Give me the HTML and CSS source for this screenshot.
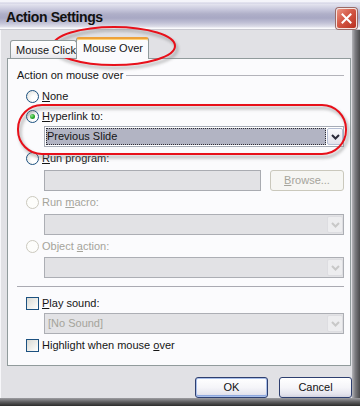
FILE: index.html
```html
<!doctype html>
<html>
	<head>
		<meta charset="utf-8" />
		<meta name="viewport" content="width=device-width, initial-scale=1" />
		<title>Action Settings</title>
		<link rel="stylesheet" href="styles.css">
	</head>
	<body>
		<div class="window">
			<header class="titlebar">
				<h1 class="title">Action Settings</h1>
				<span class="close" aria-label="Close">
					<svg width="11" height="11" viewBox="0 0 11 11">
						<path d="M1.5 1.5 L9.5 9.5 M9.5 1.5 L1.5 9.5" stroke="#fff" stroke-width="2" stroke-linecap="square" />
					</svg>
				</span>
			</header>

			<div class="frame">
				<div class="dialog">
					<div class="tabs">
						<span class="tab">Mouse Click</span>
						<span class="tab active">Mouse Over</span>
					</div>

					<div class="panel">
						<div class="group-title">Action on mouse over</div>

						<div class="opt gap-none">
							<span class="radio"></span>
							<span><u>N</u>one</span>
						</div>
						<div class="opt gap-s">
							<span class="radio on"></span>
							<span><u>H</u>yperlink to:</span>
						</div>
						<div class="select field gap-xs">
							<span class="value hl">Previous Slide</span>
							<span class="drop">
								<svg width="9" height="6" viewBox="0 0 9 6"><path d="M1 1 L4.5 4.5 L8 1" fill="none" stroke="currentColor" stroke-width="2" /></svg>
							</span>
						</div>

						<div class="opt gap-m">
							<span class="radio"></span>
							<span><u>R</u>un program:</span>
						</div>
						<div class="field program gap-l">
							<span class="textbox"></span>
							<span class="browse"><u>B</u>rowse...</span>
						</div>

						<div class="opt off gap-m">
							<span class="radio"></span>
							<span>Run <u>m</u>acro:</span>
						</div>
						<div class="select off field gap-l">
							<span class="value"></span>
							<span class="drop">
								<svg width="9" height="6" viewBox="0 0 9 6"><path d="M1 1 L4.5 4.5 L8 1" fill="none" stroke="currentColor" stroke-width="2" /></svg>
							</span>
						</div>

						<div class="opt off gap-m">
							<span class="radio"></span>
							<span>Object <u>a</u>ction:</span>
						</div>
						<div class="select off field gap-m">
							<span class="value"></span>
							<span class="drop">
								<svg width="9" height="6" viewBox="0 0 9 6"><path d="M1 1 L4.5 4.5 L8 1" fill="none" stroke="currentColor" stroke-width="2" /></svg>
							</span>
						</div>

						<hr class="rule" />

						<div class="opt gap-xl">
							<span class="check"></span>
							<span><u>P</u>lay sound:</span>
						</div>
						<div class="select off field gap-xs">
							<span class="value">[No Sound]</span>
							<span class="drop">
								<svg width="9" height="6" viewBox="0 0 9 6"><path d="M1 1 L4.5 4.5 L8 1" fill="none" stroke="currentColor" stroke-width="2" /></svg>
							</span>
						</div>
						<div class="opt gap-m">
							<span class="check"></span>
							<span>Highlight when mouse <u>o</u>ver</span>
						</div>
					</div>

					<div class="actions">
						<button type="button" class="btn default">OK</button>
						<button type="button" class="btn">Cancel</button>
					</div>
				</div>
				<div class="shade-right"></div>
			</div>
			<div class="shade-bottom"></div>

			<!-- hand-drawn highlight marks over the dialog -->
			<svg class="marks" width="360" height="406" viewBox="0 0 360 406">
				<defs>
					<filter id="soft" x="-20%" y="-40%" width="140%" height="180%">
						<feGaussianBlur stdDeviation="1.6" />
					</filter>
				</defs>
				<ellipse cx="116" cy="49" rx="61" ry="19" fill="none" stroke="#777" stroke-width="3" opacity="0.45" filter="url(#soft)" />
				<ellipse cx="114" cy="46" rx="61" ry="19" fill="none" stroke="#e8101a" stroke-width="2" />
				<rect x="20" y="108" width="328" height="49" rx="24" fill="none" stroke="#777" stroke-width="3" opacity="0.45" filter="url(#soft)" />
				<rect x="18" y="105" width="328" height="49" rx="24" fill="none" stroke="#e8101a" stroke-width="2" />
			</svg>
		</div>
	</body>
</html>
```

FILE: styles.css
```css
* {
	box-sizing: border-box;
}

html {
	--color-fg: #151515;
	--color-off: #a5a49b;
	--color-face: #e1e1e5;
	--color-sheet: #fbfbfd;
	--color-edge: #919b9c;
	--color-xp-blue: #1c5180;
	--color-mark: #e8101a;
}

body {
	margin: 0;
	font-family: "Liberation Sans", Arial, sans-serif;
	font-size: 11px;
	color: var(--color-fg);
	background: #fff;
}

.window {
	position: relative;
	width: 360px;
	height: 406px;
	overflow: hidden;
	background: var(--color-face);
}

/* title bar */

.titlebar {
	display: flex;
	justify-content: space-between;
	height: 30px;
	background: linear-gradient(
		#f4f4fa 0,
		#f4f4fa 2px,
		#cfcfe2 3px,
		#e4e4ef 4px,
		#cacade 9px,
		#afafc8 14px,
		#a8a8c4 18px,
		#c2c2d6 23px,
		#e0e0ea 27px,
		#fafafc 28px,
		#fafafc 29px,
		#c9c9d0 29px
	);
}

.title {
	margin: 0;
	padding: 9px 0 0 6px;
	font-size: 14px;
	font-weight: bold;
	line-height: 17px;
	letter-spacing: -0.4px;
	color: #111;
}

.close {
	display: flex;
	align-items: center;
	justify-content: center;
	width: 21px;
	height: 21px;
	margin: 8px 3px 0 0;
	border: 1px solid #f6e4e0;
	border-radius: 3px;
	background: linear-gradient(135deg, #ec9482, #d35846 45%, #b9301f);
	box-shadow: 0 0 0 1px #9a6a66;
}

/* body */

.frame {
	display: flex;
	height: 368px;
}

.dialog {
	width: 352px;
	padding-top: 7px;
	background: var(--color-face);
	box-shadow: inset 1px 0 #f7f7fa;
}

.shade-right {
	flex: 1;
	background: linear-gradient(to right, #b4b4b8, #7c7c80 40%, #4a4a4c);
}

.shade-bottom {
	height: 8px;
	background: linear-gradient(#9e9ea2, #5c5c5e 50%, #2c2c2c);
}

/* tabs */

.tabs {
	display: flex;
	align-items: flex-end;
	height: 21px;
	padding-left: 10px;
	position: relative;
	z-index: 1;
}

.tab {
	width: 67px;
	height: 18px;
	padding: 1px 0 0 5px;
	line-height: 16px;
	border: 1px solid var(--color-edge);
	border-bottom: none;
	border-radius: 3px 3px 0 0;
	background: linear-gradient(#fefefe, #f3f3f6 70%, #e6e6eb);
	white-space: nowrap;
}

.tab.active {
	width: 73px;
	height: 22px;
	margin: 0 0 -1px -1px;
	padding: 1px 0 0 6px;
	border-top: 2px solid #eda23a;
	box-shadow: inset 0 1px #ffd277;
	background: var(--color-sheet);
}

/* panel */

.panel {
	width: 344px;
	height: 308px;
	margin-left: 7px;
	border: 1px solid var(--color-edge);
	background: var(--color-sheet);
}

.group-title {
	display: flex;
	align-items: center;
	height: 14px;
	margin: 9px 6px 0 9px;
	line-height: 14px;
}

.group-title::after {
	content: '';
	flex: 1;
	margin-left: 3px;
	border-top: 1px solid #b3b3ba;
}

.opt {
	display: flex;
	align-items: center;
	gap: 3px;
	height: 14px;
	margin-left: 18px;
	line-height: 14px;
	white-space: nowrap;
}

.opt.off {
	color: var(--color-off);
}

.radio {
	flex: none;
	display: flex;
	align-items: center;
	justify-content: center;
	width: 13px;
	height: 13px;
	border: 1px solid var(--color-xp-blue);
	border-radius: 50%;
	background: radial-gradient(circle at 65% 65%, #fff 25%, #dcdcd6 100%);
}

.radio.on::after {
	content: '';
	width: 5px;
	height: 5px;
	border-radius: 50%;
	background: radial-gradient(circle at 35% 35%, #8ee88e, #27a827 55%, #17801a);
}

.opt.off .radio {
	border-color: #cbc9be;
	background: #fdfdfb;
}

.check {
	flex: none;
	width: 13px;
	height: 13px;
	border: 1px solid var(--color-xp-blue);
	background: linear-gradient(135deg, #d9d9d3, #f6f6f3 75%, #fff);
}

/* fields */

.field {
	display: flex;
	height: 21px;
	margin-left: 36px;
	margin-right: 6px;
}

.select {
	gap: 1px;
	padding: 1px 0 1px 1px;
	border: 1px solid #a6abb6;
	background: #fff;
}

.select .value {
	flex: 1;
	padding-left: 1px;
	border: 1px solid transparent;
	line-height: 15px;
}

.select .value.hl {
	padding-left: 0;
	border: 1px dotted #2e2e36;
	background: #b2b4c3;
}

.drop {
	display: flex;
	align-items: center;
	justify-content: center;
	width: 16px;
	padding-top: 1px;
	border: 1px solid #b5bed4;
	border-radius: 2px;
	background: linear-gradient(#fbfbfd, #e3e3ec);
	color: #2c2c3a;
}

.select.off {
	border-color: #acaeb4;
	background: #e2e2e5;
	color: var(--color-off);
}

.select.off .drop {
	border-color: #dddde1;
	background: #ededef;
	color: #c8c8c8;
}

.program {
	gap: 9px;
}

.textbox {
	flex: 1;
	border: 1px solid #a9abb1;
	background: #e2e2e5;
}

.browse {
	width: 74px;
	border: 1px solid #cac8bc;
	border-radius: 3px;
	background: #f6f6f3;
	color: var(--color-off);
	line-height: 19px;
	text-align: center;
}

.rule {
	height: 0;
	margin: 8px 6px 0 9px;
	border: none;
	border-top: 1px solid #aaaab2;
}

/* vertical rhythm inside the panel */

.gap-none {
	margin-top: 7px;
}
.gap-xs {
	margin-top: 3px;
}
.gap-s {
	margin-top: 6px;
}
.gap-m {
	margin-top: 4px;
}
.gap-l {
	margin-top: 5px;
}
.gap-xl {
	margin-top: 9px;
}

/* buttons */

.actions {
	display: flex;
	justify-content: flex-end;
	gap: 11px;
	margin-top: 11px;
}

.btn {
	appearance: none;
	width: 73px;
	height: 21px;
	padding: 0;
	border: 1px solid #2e3f6f;
	border-radius: 3px;
	background: linear-gradient(#fff, #f5f5f9 50%, #e4e4ee 85%, #d2d2de);
	font: inherit;
	color: #111;
	line-height: 19px;
}

.btn.default {
	box-shadow: inset 0 0 0 1px #a9bfea, inset 0 -1px 0 1px #8ea8de;
}

/* red highlight marks */

.marks {
	position: absolute;
	top: 0;
	left: 0;
	pointer-events: none;
}
```
